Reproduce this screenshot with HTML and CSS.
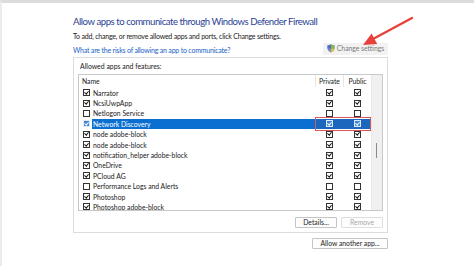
FILE: index.html
```html
<!DOCTYPE html>
<html>
<head>
    <title>Allowed apps</title>
    <link rel="stylesheet" href="styles.css">
</head>
<body>
    <div class="page">
        <h1 class="title">Allow apps to communicate through Windows Defender Firewall</h1>
        <p class="intro">To add, change, or remove allowed apps and ports, click Change settings.</p>
        <div class="link-row">
            <a class="link" href="#">What are the risks of allowing an app to communicate?</a>
            <button class="button settings-button">
                <svg class="shield" width="8" height="9" viewBox="0 0 8 9">
                    <path d="M4 0.5 L7.5 1.6 V4.6 C7.5 6.6 5.8 7.9 4 8.6 C2.2 7.9 0.5 6.6 0.5 4.6 V1.6 Z" fill="#6d8fc9"/>
                    <path d="M4 0.5 V4.5 H0.5 V1.6 Z" fill="#4a72c0"/>
                    <path d="M4 4.5 H7.5 C7.4 6.5 5.8 7.9 4 8.6 Z" fill="#e3c33c"/>
                    <path d="M4 0.5 L7.5 1.6 V4.5 H4 Z" fill="#8fb24d"/>
                </svg>
                Change settings
            </button>
        </div>

        <div class="group">
            <div class="group-label">Allowed apps and features:</div>
            <div class="list">
                <div class="list-main">
                    <div class="list-head">
                        <span class="col-name">Name</span>
                        <span class="col-check">Private</span>
                        <span class="col-check">Public</span>
                    </div>
                    <div class="rows" id="rows"></div>
                </div>
                <div class="scrollbar"><div class="thumb"></div></div>
            </div>
            <div class="group-actions">
                <button class="button">Details...</button>
                <button class="button" disabled>Remove</button>
            </div>
        </div>

        <div class="bottom-actions">
            <button class="button wide">Allow another app...</button>
        </div>
    </div>

    <svg class="arrow" width="60" height="36" viewBox="0 0 60 36">
        <line x1="55" y1="3" x2="16" y2="24" stroke="#e8413c" stroke-width="2.4" stroke-linecap="round"/>
        <path d="M6 30 L14.6 18.5 L20.2 29.1 Z" fill="#e8413c"/>
    </svg>

    <script>
        // name, enabled, private, public
        const apps = [
            ["Narrator", true, true, true],
            ["NcsiUwpApp", true, true, true],
            ["Netlogon Service", false, false, false],
            ["Network Discovery", true, true, true],
            ["node adobe-block", true, true, true],
            ["node adobe-block", true, true, true],
            ["notification_helper adobe-block", true, true, true],
            ["OneDrive", true, true, true],
            ["PCloud AG", true, true, true],
            ["Performance Logs and Alerts", false, false, false],
            ["Photoshop", true, true, true],
            ["Photoshop adobe-block", true, true, true]
        ];
        const selected = 3;

        function box(checked) {
            return '<span class="box' + (checked ? ' checked' : '') + '"></span>';
        }

        const rowsDiv = document.getElementById('rows');
        apps.forEach((app, index) => {
            const row = document.createElement('div');
            row.className = 'row' + (index === selected ? ' selected' : '');
            row.innerHTML =
                '<span class="col-name">' + box(app[1]) + '<span class="label">' + app[0] + '</span></span>' +
                '<span class="col-check">' + box(app[2]) + '</span>' +
                '<span class="col-check">' + box(app[3]) + '</span>' +
                (index === selected ? '<span class="mark"></span>' : '');
            rowsDiv.appendChild(row);
        });
    </script>
</body>
</html>
```

FILE: styles.css
```css
body {
    margin: 0;
    height: 266px;
    box-sizing: border-box;
    border-top: 3px solid #dcdcdc;
    border-left: 2px solid #ececec;
    background-color: #fff;
    font-family: Lato, "Noto Sans", sans-serif;
    color: #1a1a1a;
    position: relative;
    overflow: hidden;
}
.page {
    width: 315px;
    margin-left: 71px;
    display: flex;
    flex-direction: column;
}
.title {
    margin: 12px 0 0;
    font-size: 9.6px;
    letter-spacing: -0.46px;
    font-weight: normal;
    line-height: 14px;
    color: #2b3f96;
    white-space: nowrap;
}
.intro {
    margin: 1.5px 0 0;
    font-size: 7px;
    letter-spacing: -0.2px;
    line-height: 10px;
    white-space: nowrap;
}
.link-row {
    display: flex;
    justify-content: space-between;
    align-items: flex-start;
    margin-top: 0;
}
.link {
    margin-top: 4px;
    font-size: 7px;
    letter-spacing: -0.2px;
    line-height: 10px;
    color: #1a63c6;
    text-decoration: none;
    white-space: nowrap;
}
.button {
    font-family: inherit;
    font-size: 6.8px;
    line-height: 9px;
    padding: 0 4px;
    height: 11px;
    color: #1a1a1a;
    background-color: #fdfdfd;
    border: 1px solid #c4c4c4;
    border-radius: 1px;
    white-space: nowrap;
}
.button:disabled {
    color: #a8a8a8;
    border-color: #dedede;
}
.settings-button {
    display: flex;
    align-items: center;
    justify-content: center;
    gap: 2px;
    height: 12px;
    width: 65px;
    margin-top: 2px;
    color: #7a7a7a;
    background-color: #f2f2f2;
    border-color: #f2f2f2;
}
.shield {
    flex: none;
}
.group {
    margin-top: 2px;
    height: 176px;
    box-sizing: border-box;
    border: 1px solid #dcdcdc;
    padding: 0 4px;
    display: flex;
    flex-direction: column;
}
.group-label {
    font-size: 6.9px;
    line-height: 10px;
    margin: 3px 0 0 2px;
}
.list {
    margin-top: 3px;
    height: 137px;
    box-sizing: border-box;
    border: 1px solid #c8c8c8;
    display: flex;
    overflow: hidden;
}
.list-main {
    flex: 1;
    display: flex;
    flex-direction: column;
}
.list-head, .row {
    display: flex;
    align-items: center;
    font-size: 6.8px;
    position: relative;
}
.list-head {
    height: 13px;
    flex: none;
    padding-bottom: 1px;
    box-sizing: border-box;
}
.list-head .col-name {
    padding-left: 3px;
}
.col-name {
    flex: 1;
    display: flex;
    align-items: center;
    gap: 2px;
    padding-left: 4px;
    white-space: nowrap;
}
.col-check {
    width: 27px;
    display: flex;
    justify-content: center;
    align-items: center;
    align-self: stretch;
    border-left: 1px solid transparent;
}
.list-head .col-check {
    border-left-color: #e6e6e6;
}
.row {
    height: 10.4px;
    flex: none;
}
.label {
    padding: 0 1px;
    line-height: 10px;
}
.box {
    width: 5px;
    height: 5px;
    border: 1px solid #333;
    background-color: #fff;
    position: relative;
    flex: none;
}
.box.checked::after {
    content: "";
    position: absolute;
    left: 1px;
    top: -0.5px;
    width: 1.6px;
    height: 3.2px;
    border: solid #111;
    border-width: 0 1.2px 1.2px 0;
    transform: rotate(40deg);
}
.row.selected .label,
.row.selected .col-check {
    background-color: #0a6fd0;
    color: #fff;
}
.row.selected .label {
    flex: 1;
    align-self: stretch;
    display: flex;
    align-items: center;
}
.row.selected .col-check {
    background-color: #1d66be;
}
.row.selected .box {
    border-color: #dce8f6;
    background-color: #3f86d6;
}
.row.selected .box.checked::after {
    border-color: #fff;
}
.mark {
    position: absolute;
    right: 0;
    top: -2px;
    width: 56px;
    height: 14px;
    box-sizing: border-box;
    border: 1.5px solid #d8585c;
}
.scrollbar {
    width: 10px;
    flex: none;
    background-color: #f0f0f0;
    border-left: 1px solid #e8e8e8;
    position: relative;
}
.thumb {
    position: absolute;
    left: 4px;
    top: 68px;
    width: 1px;
    height: 15px;
    background-color: #8a8a8a;
}
.group-actions {
    display: flex;
    justify-content: flex-end;
    gap: 4px;
    margin-top: 6px;
}
.group-actions .button {
    width: 42px;
}
.bottom-actions {
    display: flex;
    justify-content: flex-end;
    margin-top: 5px;
}
.wide {
    width: 76px;
}
.arrow {
    position: absolute;
    left: 355px;
    top: 12px;
}
```
